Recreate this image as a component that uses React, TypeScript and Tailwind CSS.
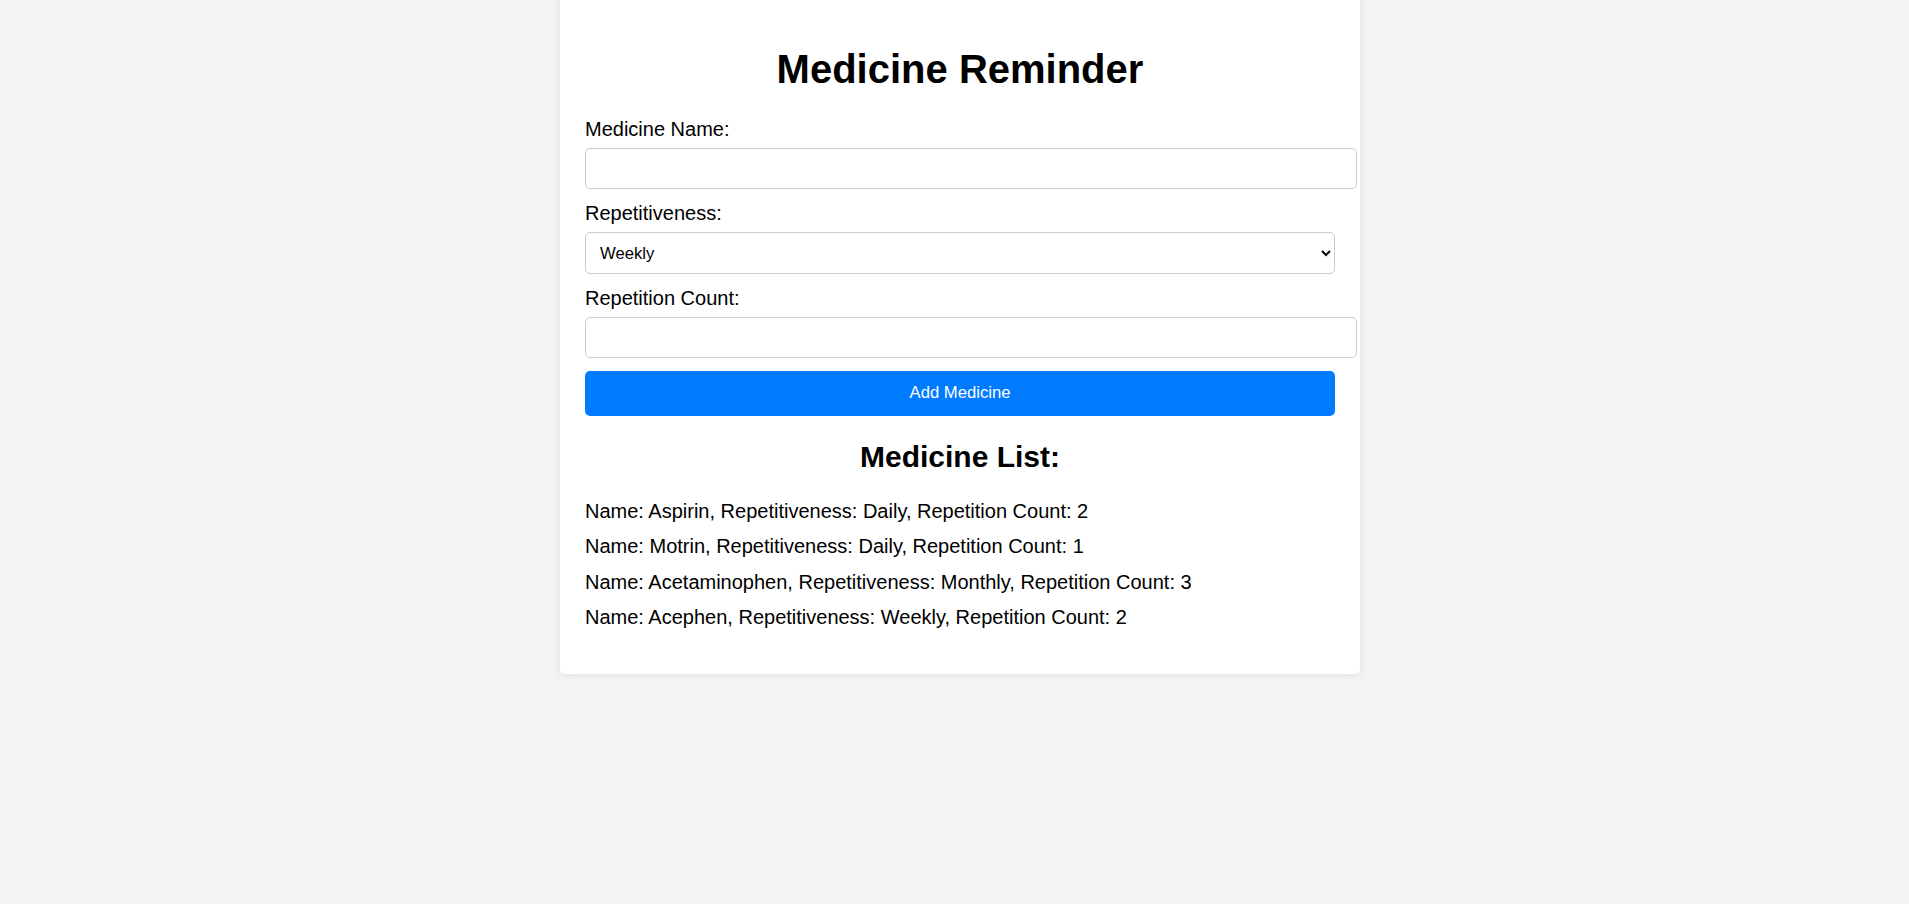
const medicines = [
  { name: 'Aspirin', repeat: 'Daily', count: 2 },
  { name: 'Motrin', repeat: 'Daily', count: 1 },
  { name: 'Acetaminophen', repeat: 'Monthly', count: 3 },
  { name: 'Acephen', repeat: 'Weekly', count: 2 },
]

export default function App() {
  return (
    <div className="min-h-[904px] bg-[#f4f4f4] flex justify-center pl-[11px] font-['Liberation_Sans',Arial,sans-serif] text-black">
      <div className="w-[800px] self-start bg-white rounded-b-[5px] shadow-[0_0_10px_rgba(0,0,0,0.1)] pt-[19px] px-[25px] pb-[45px]">
        <h1 className="text-[40px] font-bold leading-[46px] text-center my-[27px] mb-[26px]">Medicine Reminder</h1>

        <label className="block text-[20px] leading-[23px] mb-[7px]">Medicine Name:</label>
        <input
          type="text"
          className="block w-[772px] h-[41px] px-[10px] border border-[#ccc] rounded-[5px] text-[16.67px] leading-[normal] mb-[12.5px] outline-none"
        />

        <label className="block text-[20px] leading-[23px] mb-[7.5px]">Repetitiveness:</label>
        <select
          defaultValue="Weekly"
          className="block w-[750px] h-[42px] px-[10px] border border-[#ccc] rounded-[5px] text-[16.67px] leading-[normal] mb-[12.5px] bg-white appearance-auto outline-none"
        >
          <option>Daily</option>
          <option>Weekly</option>
          <option>Monthly</option>
        </select>

        <label className="block text-[20px] leading-[23px] mb-[7px]">Repetition Count:</label>
        <input
          type="number"
          className="block w-[772px] h-[41px] px-[10px] border border-[#ccc] rounded-[5px] text-[16.67px] leading-[normal] mb-[13.5px] outline-none"
        />

        <button className="block w-[750px] h-[45px] pb-[2px] bg-[#007bff] text-white text-[16.67px] leading-[normal] rounded-[5px]">
          Add Medicine
        </button>

        <h2 className="text-[30px] font-bold leading-[34.5px] text-center mt-[24px] mb-[25.5px]">Medicine List:</h2>

        <ul>
          {medicines.map((m) => (
            <li key={m.name} className="text-[20px] leading-[23px] mb-[12.3px] last:mb-0">
              Name: {m.name}, Repetitiveness: {m.repeat}, Repetition Count: {m.count}
            </li>
          ))}
        </ul>
      </div>
    </div>
  )
}
